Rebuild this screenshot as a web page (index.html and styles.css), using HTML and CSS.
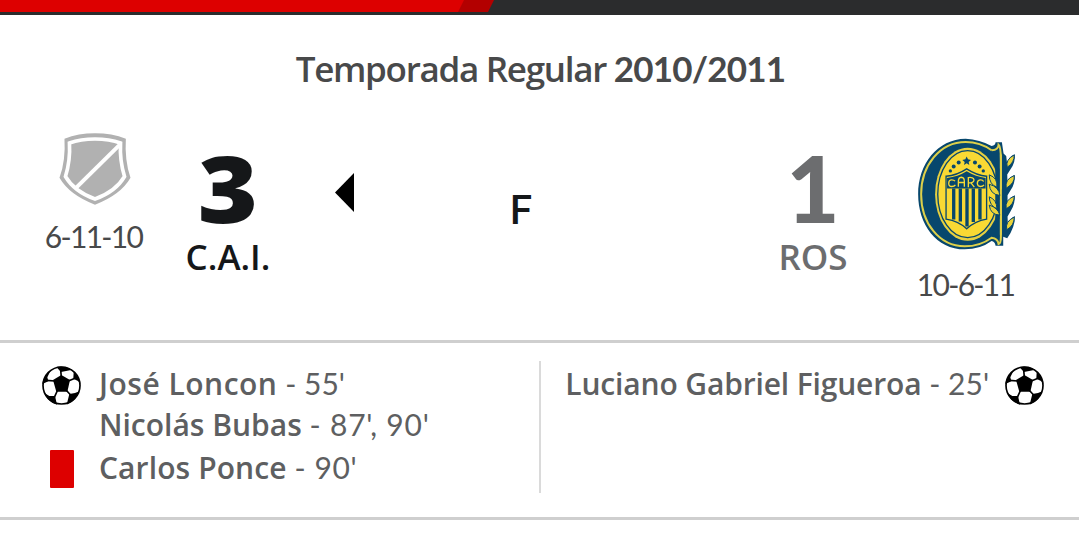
FILE: index.html
```html
<!DOCTYPE html>
<html lang="es">
<head>
<meta charset="utf-8">
<title>C.A.I. - ROS</title>
<link rel="stylesheet" href="styles.css">
</head>
<body>
<svg class="defs" aria-hidden="true">
  <symbol id="ball" viewBox="37 32 117 117">
    <circle cx="95.500" cy="90.500" r="55.500" fill="#fff" stroke="#000" stroke-width="5"/>
    <path d="M95 59L121 74L113 109L80 109L70 74Z"/>
    <path d="M80 35Q103 30 128 43L113 46L94 50Z"/>
    <path d="M132 50Q149 65 152 86L145 77L131 70Z"/>
    <path d="M149 108Q138 138 111 148L119 116L136 113Z"/>
    <path d="M82 148Q54 139 43 112L59 122L76 122Z"/>
    <path d="M38 86Q42 60 64 43L53 66L56 78Z"/>
    <path fill="none" stroke="#000" stroke-width="5" d="M95 65L93 44M116 77L136 69M109 104L123 119M84 104L74 126M75 77L51 75"/>
  </symbol>
</svg>
<div class="topbar"><svg width="494" height="12" viewBox="0 0 494 12"><path fill="#b30000" d="M450 0H494L488 12H450Z"/><path fill="#d00" d="M0 0H464L458 12H0Z"/></svg></div>
<h1 class="season">Temporada Regular <span class="year">2010/2011</span></h1>
<main class="match">
  <div class="team home">
    <svg width="72" height="72" viewBox="87 38 216 217">
      <path fill="#b1b1b1" d="M103 55Q145 39 195 39Q246 39 288 55Q284 121 302 173Q272 225 195 254Q118 225 88 173Q107 121 103 55Z"/>
      <path fill="none" stroke="#fff" stroke-width="11" d="M118 68Q152 56 195 56Q238 56 272 68Q269 122 284 169Q258 214 195 237Q132 214 106 169Q121 122 118 68Z"/>
      <path stroke="#fff" stroke-width="12" d="M137 204L270 73"/>
    </svg>
    <div class="record rec-home">6-11-10</div>
  </div>
  <div class="score"><div class="goals wide">3</div><div class="abbr">C.A.I.</div></div>
  <div class="winner"><svg width="19" height="39" viewBox="0 0 19 39"><path d="M19 0V39L0 19.500Z"/></svg></div>
  <div class="status">F</div>
  <div class="score loser"><div class="goals">1</div><div class="abbr">ROS</div></div>
  <div class="team away">
    <svg width="99" height="112" viewBox="54 38 297 337">
      <path fill="#07476d" d="M200 40Q242 42 278 62Q290 60 290 51H309L314 85L322 92L325 118Q328 94 348 87Q350 112 335 132L325 148L326 176Q332 154 348 149Q349 174 336 194L326 210L326 238Q332 217 348 210Q349 236 336 257L326 274L327 300Q332 280 348 273Q349 306 325 340L313 335V362H290Q288 350 278 348Q244 373 197 373C112 373 57 298 57 207S115 41 200 40Z"/>
      <path fill="none" stroke="#ddd04a" stroke-width="6" d="M278 75Q299 73 299 58Q306 64 306 104V335Q306 356 299 357Q297 340 278 338Q243 364 197 364C120 364 66 293 66 207S122 50 200 50Q244 50 278 75"/>
      <ellipse cx="206" cy="207" rx="98" ry="140" fill="#e6d040"/>
      <ellipse cx="206" cy="207" rx="90" ry="131" fill="#f9d934" stroke="#07476d" stroke-width="4"/>
      <path fill="#07476d" d="M289 130H303V282H289Z"/>
      <path stroke="#ddd04a" stroke-width="6" d="M306 88V192M306 224V329"/>
      <path fill="#f9d934" stroke="#07476d" stroke-width="4" d="M141 153Q173 151 203 131Q234 151 263 153V282Q228 288 203 311Q179 288 141 282Z"/>
      <path fill="#07476d" d="M144 158Q176 155 203 138Q231 155 260 158V190H144Z"/>
      <path stroke="#07476d" stroke-width="10" d="M164 190V283M184 190V289M204 190V304M223 190V291M243 190V283"/>
      <path fill="none" stroke="#f9d934" stroke-width="4" d="M168 168Q164 163 156 164Q149 165 149 174Q149 184 158 184Q166 184 169 179M178 185V168Q178 157 187 156Q196 157 196 168V185M178 172H196M208 186V157Q224 155 225 164Q225 173 208 173M216 173L226 186M254 169Q251 163 243 164Q235 165 235 175Q236 184 244 184Q252 184 255 179"/>
      <g fill="#07476d">
        <path d="M203 94L207 102L216 104L209 110L211 119L203 114L195 119L197 110L190 104L199 102Z"/>
        <circle cx="179" cy="112" r="6"/><circle cx="228" cy="112" r="6"/>
        <circle cx="164" cy="124" r="6"/><circle cx="242" cy="124" r="6"/>
        <circle cx="154" cy="137" r="5"/><circle cx="253" cy="137" r="5"/>
      </g>
      <g fill="#e9d33a" stroke="#07476d" stroke-width="3">
        <path d="M346 89Q347 112 325 126Q319 103 346 89Z"/>
        <path d="M346 151Q349 174 322 189Q317 162 346 151Z"/>
        <path d="M346 213Q347 237 322 251Q317 224 346 213Z"/>
        <path d="M346 276Q347 301 324 314Q317 290 346 276Z"/>
        <path d="M271 149Q297 158 294 186Q271 178 271 149Z"/>
        <path d="M271 177Q300 185 303 211Q273 208 271 177Z"/>
        <path d="M271 215Q294 224 294 251Q272 243 271 215Z"/>
        <path d="M271 240Q296 247 303 270Q274 269 271 240Z"/>
      </g>
    </svg>
    <div class="record">10-6-11</div>
  </div>
</main>
<section class="events">
  <ul class="side left">
    <li><svg class="ball"><use href="#ball"/></svg><span><b class="n1">José Loncon</b> <span class="t t1">- 55'</span></span></li>
    <li><i class="blank"></i><span><b>Nicolás Bubas</b> <span class="t t2">- 87', 90'</span></span></li>
    <li class="r3"><i class="card"></i><span><b class="n3">Carlos Ponce</b> <span class="t t3">- 90'</span></span></li>
  </ul>
  <ul class="side right">
    <li><span><b class="n4">Luciano Gabriel Figueroa</b> <span class="t">- 25'</span></span><svg class="ball"><use href="#ball"/></svg></li>
  </ul>
</section>
</body>
</html>
```
FILE: styles.css
```css
* { box-sizing: border-box; }
body { margin: 0; background: #fff; font-family: "Open Sans", sans-serif; color: #48494a; overflow: hidden; }
.defs { display: none; }
.topbar { height: 15px; background: #2b2c2d; }
.topbar svg { display: block; }
.season { margin: 33px 0 0; padding-left: 2px; text-align: center; font-size: 35px; line-height: 40px; font-weight: 600; white-space: nowrap; letter-spacing: -1.3px; }
.year { font-family: Lato, sans-serif; font-weight: 700; letter-spacing: -.8px; }
.match { display: grid; grid-template-columns: 168px 120px 66px 399px 120px 206px; height: 252px; }
.team { display: flex; flex-direction: column; align-items: center; }
.home { padding: 45px 0 0 21px; }
.away { padding: 50px 20px 0 0; }
.home svg, .away svg { margin-top: -1px; }
.record { font: 400 30px/36px Lato, sans-serif; letter-spacing: -1.7px; white-space: nowrap; margin: 16px 1px 0 0; }
.rec-home { margin: 13px 2px 0 0; }
.score { padding-top: 54px; text-align: center; color: #151719; }
.goals { font: 900 92px/90px Lato, sans-serif; }
.wide { font-family: "Open Sans", sans-serif; font-weight: 800; transform: scaleX(1.12); }
.abbr { font-size: 35px; line-height: 40px; font-weight: 600; margin-top: 4px; white-space: nowrap; }
.loser { color: #6c6d6f; }
.winner { padding-top: 84px; display: flex; justify-content: flex-end; align-items: flex-start; }
.status { padding: 98px 65px 0 0; text-align: center; font: 500 40px/48px Roboto, sans-serif; color: #151719; }
.events { display: grid; grid-template-columns: 541px 538px; height: 180px; margin-top: -1px; border-top: 3px solid #cfcfcf; border-bottom: 3px solid #cfcfcf; padding: 18px 0 24px; }
.side { list-style: none; margin: 0; padding: 0; font-size: 30px; color: #5e5f61; }
.side li { display: flex; align-items: center; height: 41px; white-space: nowrap; line-height: 41px; }
.side li > span { margin: -4px 0 0 -1px; }
.side b { font-weight: 600; }
.side .n1 { letter-spacing: .5px; }
.side .n3 { letter-spacing: .1px; }
.side .n4 { letter-spacing: -.15px; }
.t { font-family: Lato, sans-serif; font-weight: 400; }
.t2 { letter-spacing: .8px; }
.t3 { letter-spacing: .6px; }
.left { border-right: 2px solid #dadada; padding: 4px 0 0 42px; height: 132px; }
.side .r3 { height: 44px; line-height: 44px; }
.ball { width: 39px; height: 39px; margin-right: 19px; flex: none; }
.blank { width: 58px; }
.card { width: 24px; height: 38px; background: #d00; border-radius: 1px; margin: 0 26px 0 8px; }
.right { padding: 4px 35px 0 0; }
.right li { justify-content: flex-end; }
.right .ball { margin: 0 0 0 16px; }
```
